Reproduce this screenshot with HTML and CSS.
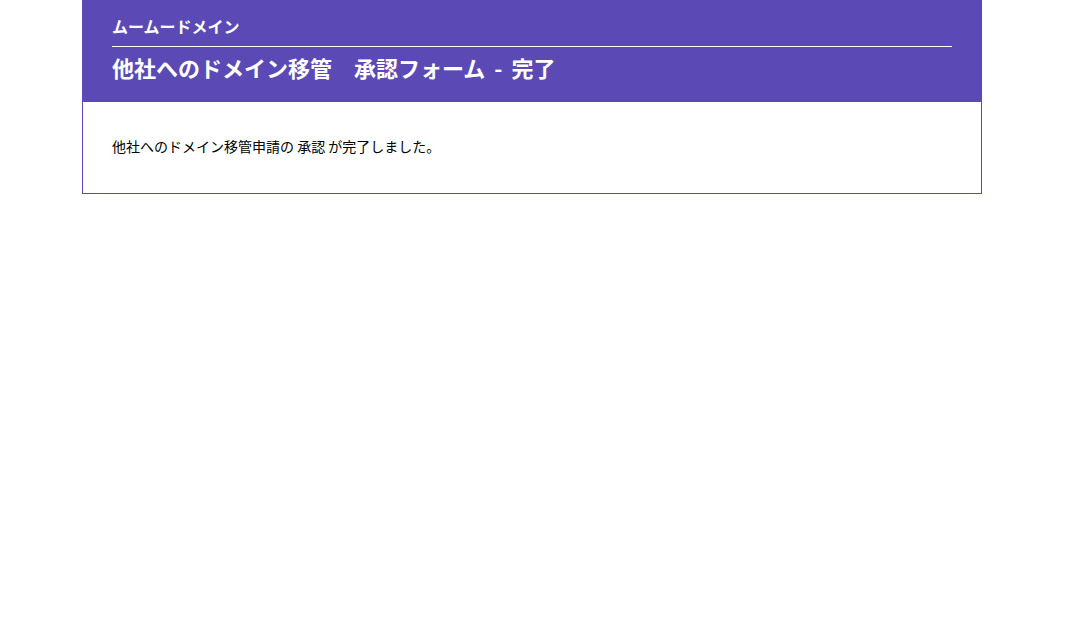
FILE: index.html
```html
<!DOCTYPE html>
<html lang="ja">
<head>
  <meta charset="utf-8">
  <title>他社へのドメイン移管 承認フォーム - 完了</title>
  <link rel="stylesheet" href="styles.css">
</head>
<body>
  <div class="wrapper">
    <div class="header">
      <div class="brand">ムームードメイン</div>
      <h1 class="title">他社へのドメイン移管　承認フォーム - 完了</h1>
    </div>
    <div class="content">
      <p class="message">他社へのドメイン移管申請の 承認 が完了しました。</p>
    </div>
  </div>
</body>
</html>
```

FILE: styles.css
```css
body {
  margin: 0 16px 0 0;
  background-color: #ffffff;
  font-family: "Noto Sans CJK JP", "Noto Sans", sans-serif;
  color: #000000;
}

.wrapper {
  width: 900px;
  margin: 0 auto;
  box-sizing: border-box;
  border: 1px solid #5b4ab6;
  border-top: none;
}

.header {
  background-color: #5b4ab6;
  color: #ffffff;
  padding: 14px 29px 20px;
}

.brand {
  font-size: 16px;
  font-weight: bold;
  line-height: 24px;
  padding-bottom: 8px;
  border-bottom: 1px solid #ffffff;
}

.title {
  margin: 0;
  padding-top: 5px;
  font-size: 22px;
  font-weight: bold;
  line-height: 30px;
  word-spacing: 4px;
}

.content {
  padding: 34px 29px 37px;
}

.message {
  margin: 0;
  font-size: 14px;
  line-height: 20px;
}
```
